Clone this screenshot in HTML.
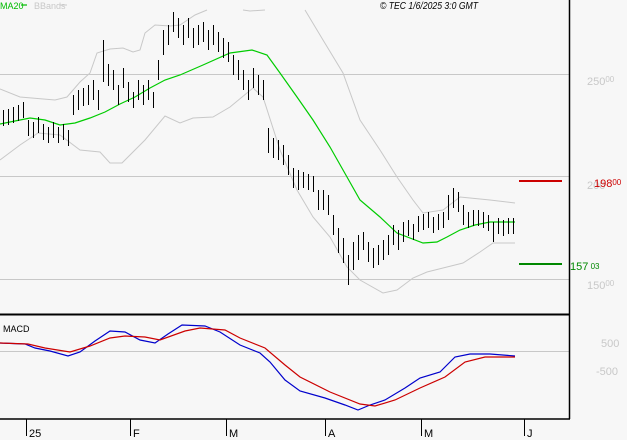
<!DOCTYPE html><html><head><style>body{margin:0;background:#f7f7f7;}svg{display:block;font-family:"Liberation Sans",sans-serif;}</style></head><body>
<svg width="627" height="440" viewBox="0 0 627 440" xmlns="http://www.w3.org/2000/svg">
<rect width="627" height="440" fill="#f7f7f7"/>
<g stroke="#c8c8c8" stroke-width="1" fill="none">
<line x1="0" y1="74.5" x2="569" y2="74.5"/><line x1="0" y1="176.5" x2="569" y2="176.5"/><line x1="0" y1="279.5" x2="569" y2="279.5"/><line x1="0" y1="351.5" x2="569" y2="351.5"/>
<polyline points="0,89 20,97 55,100 67,97 80,82 90,73 97,53 110,49 123,48 133,52 140,50 145,33 155,25 170,26 180,25 195,15 207,10"/>
<polyline points="243,10 250,11 265,10"/>
<polyline points="305,10 323,40 343,73 360,120 380,150 397,177 413,200 423,213 443,210 460,197 470,198 490,200 515,203"/>
<polyline points="0,160 20,145 38,133 60,135 80,150 100,152 110,163 122,163 145,140 165,116 180,123 193,118 213,117 230,107 253,88 263,97 280,150 297,190 313,217 330,237 347,267 360,280 383,293 397,290 413,278 427,272 447,267 463,263 480,252 493,243 515,243"/>
</g>
<polyline fill="none" stroke="#00cc00" stroke-width="1.2" points="0,124 15,121 30,118 45,120 60,125 75,123 90,118 105,112 120,104 135,97 150,88 165,80 180,75 203,65 230,53 252,50 267,55 280,73 297,97 313,120 330,147 347,177 360,200 380,217 397,233 423,243 437,242 447,237 460,230 475,225 490,222 500,222 515,222"/>
<path stroke="#000" stroke-width="1" fill="none" shape-rendering="crispEdges" d="
M3.5,110v16M8.5,109v16M13.5,107v16M18.5,105v16M23.5,102v16M28.5,120v16M33.5,122v16M38.5,117v16M43.5,124v16M48.5,127v16M53.5,122v16M58.5,127v16M63.5,124v16M68.5,130v16M73.5,95v20M78.5,90v20M83.5,88v18M88.5,85v20M93.5,80v20M98.5,90v20M103.5,40v42M108.5,64v22M113.5,70v20M118.5,85v20M123.5,68v20M128.5,82v20M133.5,92v16M138.5,80v20M143.5,85v20M148.5,80v20M153.5,92v16M158.5,60v20M163.5,30v25M168.5,25v20M173.5,12v20M178.5,18v20M183.5,25v20M188.5,18v20M193.5,28v20M198.5,25v20M203.5,22v20M208.5,30v20M213.5,25v20M218.5,32v20M223.5,38v20M228.5,42v20M233.5,55v20M238.5,60v20M243.5,70v20M248.5,80v20M253.5,68v20M258.5,75v20M263.5,80v20M268.5,128v25M273.5,138v20M278.5,140v20M283.5,145v20M288.5,155v20M293.5,168v20M298.5,170v20M303.5,172v16M308.5,174v16M313.5,176v16M318.5,190v20M323.5,190v20M328.5,195v20M333.5,215v20M338.5,228v25M343.5,238v25M348.5,255v30M353.5,242v28M358.5,235v25M363.5,232v18M368.5,242v20M373.5,248v20M378.5,245v20M383.5,240v20M388.5,235v20M393.5,225v20M398.5,230v20M403.5,222v20M408.5,220v16M413.5,224v16M418.5,216v16M423.5,214v16M428.5,212v16M433.5,217v16M438.5,214v16M443.5,212v16M448.5,195v25M453.5,188v20M458.5,192v20M463.5,205v20M468.5,212v16M473.5,210v16M478.5,210v16M483.5,212v16M488.5,215v16M493.5,222v20M498.5,218v16M503.5,220v16M508.5,218v16M513.5,218v16"/>
<line x1="569.5" y1="0" x2="569.5" y2="419" stroke="#000" stroke-width="1.5"/>
<line x1="0" y1="314.5" x2="569" y2="314.5" stroke="#000" stroke-width="2"/>
<line x1="0" y1="419" x2="570" y2="419" stroke="#000" stroke-width="1.5"/>
<g stroke="#000" stroke-width="1"><line x1="26.5" y1="419" x2="26.5" y2="436"/><line x1="130.5" y1="419" x2="130.5" y2="436"/><line x1="226.5" y1="419" x2="226.5" y2="436"/><line x1="325.5" y1="419" x2="325.5" y2="436"/><line x1="421.5" y1="419" x2="421.5" y2="436"/><line x1="524.5" y1="419" x2="524.5" y2="436"/></g>
<g font-size="11" fill="#000"><text x="29" y="437">25</text><text x="133" y="437">F</text><text x="229" y="437">M</text><text x="328" y="437">A</text><text x="424" y="437">M</text><text x="527" y="437">J</text></g>
<polyline fill="none" stroke="#0000cc" stroke-width="1.2" points="0,343 25,344 35,348 50,351 68,356 80,352 95,341 110,331 125,332 140,340 155,343 168,334 182,325 205,326 220,332 240,345 260,353 270,362 285,380 300,391 325,398 345,405 358,410 370,405 385,400 405,388 420,378 440,372 455,357 470,354 490,354 515,356"/>
<polyline fill="none" stroke="#cc0000" stroke-width="1.2" points="0,343 28,344 45,348 70,352 90,346 110,338 125,336 145,337 160,340 185,331 200,328 225,330 240,338 265,348 285,365 300,377 330,392 360,404 375,406 395,400 420,388 445,377 465,362 485,357 515,357"/>
<text x="3" y="332" font-size="9" fill="#000">MACD</text>
<text x="0" y="9" font-size="9" fill="#00bb00">MA20</text><line x1="21" y1="5" x2="27" y2="5" stroke="#00bb00" stroke-width="1.2"/>
<text x="34" y="9" font-size="9" fill="#c8c8c8">BBands</text><line x1="60" y1="5" x2="67" y2="5" stroke="#c8c8c8"/>
<text x="380" y="9" font-size="10" font-style="italic" fill="#000" textLength="98" lengthAdjust="spacingAndGlyphs">© TEC 1/6/2025 3:0 GMT</text>
<g font-size="11" fill="#c8c8c8"><text x="587" y="85">250<tspan font-size="8" dy="-3">00</tspan></text><text x="587" y="189">200</text><text x="587" y="289">150<tspan font-size="8" dy="-3">00</tspan></text><text x="601" y="347">500</text><text x="596" y="375">-500</text></g>
<line x1="519" y1="181" x2="562" y2="181" stroke="#cc0000" stroke-width="2"/>
<text x="594" y="187" font-size="11" fill="#cc0000">198<tspan font-size="8" dy="-2">00</tspan></text>
<line x1="519" y1="264" x2="562" y2="264" stroke="#008800" stroke-width="2"/>
<text x="570" y="270" font-size="11" fill="#008800">157<tspan font-size="8" dy="-1"> 03</tspan></text>
</svg></body></html>
